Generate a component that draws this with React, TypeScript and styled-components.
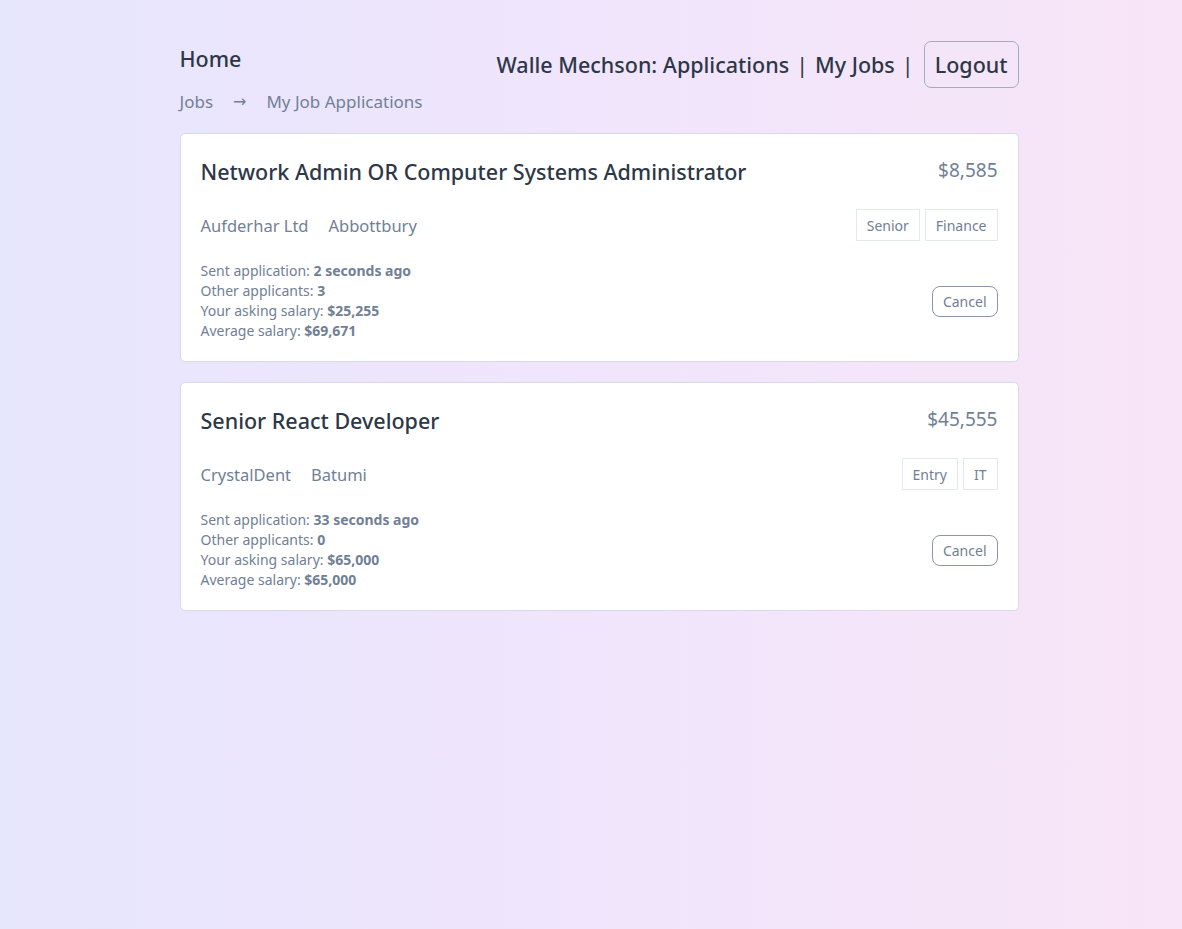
import React from "react";
import styled, { createGlobalStyle } from "styled-components";

const GlobalStyle = createGlobalStyle`
  html, body {
    margin: 0;
    padding: 0;
  }
  body {
    min-height: 929px;
    background: linear-gradient(90deg, #e6e6fd 0%, #f0e5fc 50%, #f8e5f7 100%);
    font-family: "Noto Sans", "Open Sans", sans-serif;
    color: #2d3748;
  }
`;

const Shell = styled.div`
  padding-left: 16px;
`;

const Page = styled.div`
  width: 839px;
  margin: 0 auto;
  padding-top: 41px;
`;

const Header = styled.header`
  display: flex;
  justify-content: space-between;
  align-items: flex-start;
`;

const Left = styled.div`
  display: flex;
  flex-direction: column;
`;

const HomeLink = styled.a`
  font-size: 21.5px;
  font-weight: 500;
  color: #2d3748;
  line-height: 36px;
`;

const Crumbs = styled.div`
  display: flex;
  align-items: center;
  gap: 20px;
  margin-top: 13px;
  font-size: 17px;
  color: #718096;
  line-height: 24px;
`;

const Arrow = styled.span`
  font-family: "DejaVu Sans", sans-serif;
  font-size: 16px;
`;

const Nav = styled.nav`
  display: flex;
  align-items: center;
  gap: 7px;
  font-size: 21.5px;
  font-weight: 500;
  color: #2d3748;
`;

const Sep = styled.span`
  font-weight: 400;
`;

const LogoutButton = styled.button`
  font-family: inherit;
  font-size: 21.5px;
  font-weight: 500;
  color: #2d3748;
  background: transparent;
  border: 1px solid #a0aec0;
  border-radius: 7px;
  height: 47px;
  padding: 0 10px;
  margin-left: 3px;
`;

const List = styled.div`
  display: flex;
  flex-direction: column;
  gap: 20px;
  margin-top: 19px;
`;

const Card = styled.article`
  background: #fff;
  border: 1px solid #d5d9ea;
  border-radius: 5px;
  padding: 20px 20px 20px;
`;

const Row = styled.div<{ $mt?: number; $align?: string }>`
  display: flex;
  justify-content: space-between;
  align-items: ${(p) => p.$align || "center"};
  margin-top: ${(p) => p.$mt || 0}px;
`;

const Title = styled.h2`
  margin: 0;
  font-size: 21.5px;
  font-weight: 500;
  color: #2d3748;
  line-height: 36px;
`;

const Price = styled.div`
  font-size: 19px;
  color: #718096;
  line-height: 32px;
`;

const Meta = styled.div`
  display: flex;
  gap: 20px;
  font-size: 16.5px;
  color: #718096;
`;

const Tags = styled.div`
  display: flex;
  gap: 5px;
`;

const Tag = styled.span`
  display: inline-flex;
  align-items: center;
  height: 30px;
  padding: 0 10px;
  border: 1px solid #e2e8f0;
  font-size: 14px;
  color: #718096;
`;

const Info = styled.div`
  font-size: 14px;
  line-height: 20px;
  color: #718096;

  b {
    font-weight: 700;
  }
`;

const CancelButton = styled.button`
  font-family: inherit;
  font-size: 14px;
  color: #718096;
  background: #fff;
  border: 1px solid #8a96ab;
  border-radius: 8px;
  height: 31px;
  padding: 0 10px;
`;

type Job = {
  title: string;
  price: string;
  company: string;
  city: string;
  tags: string[];
  sent: string;
  others: string;
  asking: string;
  average: string;
};

const jobs: Job[] = [
  {
    title: "Network Admin OR Computer Systems Administrator",
    price: "$8,585",
    company: "Aufderhar Ltd",
    city: "Abbottbury",
    tags: ["Senior", "Finance"],
    sent: "2 seconds ago",
    others: "3",
    asking: "$25,255",
    average: "$69,671",
  },
  {
    title: "Senior React Developer",
    price: "$45,555",
    company: "CrystalDent",
    city: "Batumi",
    tags: ["Entry", "IT"],
    sent: "33 seconds ago",
    others: "0",
    asking: "$65,000",
    average: "$65,000",
  },
];

export default function App() {
  return (
    <>
      <GlobalStyle />
      <Shell>
        <Page>
          <Header>
            <Left>
              <HomeLink>Home</HomeLink>
              <Crumbs>
                <span>Jobs</span>
                <Arrow>→</Arrow>
                <span>My Job Applications</span>
              </Crumbs>
            </Left>
            <Nav>
              <span>Walle Mechson: Applications</span>
              <Sep>|</Sep>
              <span>My Jobs</span>
              <Sep>|</Sep>
              <LogoutButton>Logout</LogoutButton>
            </Nav>
          </Header>
          <List>
            {jobs.map((j) => (
              <Card key={j.title}>
                <Row $align="flex-start">
                  <Title>{j.title}</Title>
                  <Price>{j.price}</Price>
                </Row>
                <Row $mt={19}>
                  <Meta>
                    <span>{j.company}</span>
                    <span>{j.city}</span>
                  </Meta>
                  <Tags>
                    {j.tags.map((t) => (
                      <Tag key={t}>{t}</Tag>
                    ))}
                  </Tags>
                </Row>
                <Row $mt={20}>
                  <Info>
                    <div>
                      Sent application: <b>{j.sent}</b>
                    </div>
                    <div>
                      Other applicants: <b>{j.others}</b>
                    </div>
                    <div>
                      Your asking salary: <b>{j.asking}</b>
                    </div>
                    <div>
                      Average salary: <b>{j.average}</b>
                    </div>
                  </Info>
                  <CancelButton>Cancel</CancelButton>
                </Row>
              </Card>
            ))}
          </List>
        </Page>
      </Shell>
    </>
  );
}
